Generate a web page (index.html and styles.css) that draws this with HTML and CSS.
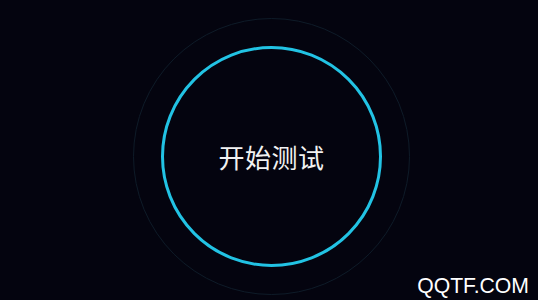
FILE: index.html
```html
<!DOCTYPE html>
<html lang="zh">
<head>
<meta charset="utf-8">
<link rel="stylesheet" href="styles.css">
</head>
<body>
<main class="screen">
  <div class="outer-ring">
    <div class="inner-ring">
      <span class="label">开始测试</span>
    </div>
  </div>
  <div class="watermark">QQTF.COM</div>
</main>
</body>
</html>
```
FILE: styles.css
```css
html, body {
  margin: 0;
  padding: 0;
  background: #04040f;
}
.screen {
  position: relative;
  width: 538px;
  height: 300px;
  box-sizing: border-box;
  padding: 18px 0 0 133px;
  background: #04040f;
  overflow: hidden;
}
.outer-ring {
  width: 277px;
  height: 277px;
  box-sizing: border-box;
  border: 1.5px solid #0e1b28;
  border-radius: 50%;
  display: flex;
  align-items: center;
  justify-content: center;
}
.inner-ring {
  width: 221px;
  height: 221px;
  box-sizing: border-box;
  border: 3px solid #22c3e4;
  border-radius: 50%;
  display: flex;
  align-items: center;
  justify-content: center;
}
.label {
  font-family: "Noto Sans CJK SC", sans-serif;
  font-size: 26px;
  line-height: 1;
  color: #f2f2f2;
  letter-spacing: 0.5px;
}
.watermark {
  position: absolute;
  right: 9px;
  bottom: 4px;
  font-family: "Liberation Sans", Arial, sans-serif;
  font-size: 21.2px;
  line-height: 1;
  color: #ffffff;
}
```
